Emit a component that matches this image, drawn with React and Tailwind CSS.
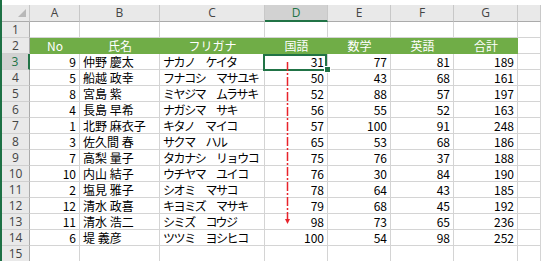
import React from "react";

const rows = [
  [9, "仲野 慶太", "ナカノ　ケイタ", 31, 77, 81, 189],
  [5, "船越 政幸", "フナコシ　マサユキ", 50, 43, 68, 161],
  [8, "宮島 紫", "ミヤジマ　ムラサキ", 52, 88, 57, 197],
  [4, "長島 早希", "ナガシマ　サキ", 56, 55, 52, 163],
  [1, "北野 麻衣子", "キタノ　マイコ", 57, 100, 91, 248],
  [3, "佐久間 春", "サクマ　ハル", 65, 53, 68, 186],
  [7, "高梨 量子", "タカナシ　リョウコ", 75, 76, 37, 188],
  [10, "内山 結子", "ウチヤマ　ユイコ", 76, 30, 84, 190],
  [2, "塩見 雅子", "シオミ　マサコ", 78, 64, 43, 185],
  [12, "清水 政喜", "キヨミズ　マサキ", 79, 68, 45, 192],
  [11, "清水 浩二", "シミズ　コウジ", 98, 73, 65, 236],
  [6, "堤 義彦", "ツツミ　ヨシヒコ", 100, 54, 98, 252],
];

const letters = ["A", "B", "C", "D", "E", "F", "G", ""];
const heads = ["No", "氏名", "フリガナ", "国語", "数学", "英語", "合計"];

const grid = "grid grid-cols-[28px_50px_80px_105px_63px_63px_63px_64px_1fr]";
const cell = "h-4 border-r border-b border-[#d4d4d4] px-[3px] leading-[15px] whitespace-nowrap overflow-hidden";
const rowHead = "h-4 border-r border-b border-r-[#ababab] border-b-[#d0d0d0] bg-[#e9e9e9] text-center text-[12px] leading-[15px] text-[#444] font-['Open_Sans',sans-serif]";

const App = () => (
  <div className="relative w-[541px] h-[261px] overflow-hidden bg-white border-l-2 border-[#1e7145] pt-[5px] font-['Noto_Sans_CJK_JP',sans-serif] text-[12px] text-black">
    {/* column letters */}
    <div className={`${grid} font-['Open_Sans',sans-serif] text-[12px] text-[#444]`}>
      <div className="relative h-[17px] bg-[#e9e9e9] border-r border-b border-r-[#c8c8c8] border-b-[#ababab]">
        <div className="absolute right-[3px] bottom-[4px] w-0 h-0 [border-bottom:8px_solid_#b8b8b8] [border-left:8px_solid_transparent]" />
      </div>
      {letters.map((l, i) =>
        l === "D" ? (
          <div key={i} className="h-[17px] bg-[#d2d2d2] border-r border-r-[#c8c8c8] border-b-2 border-b-[#217346] text-center leading-[16px] text-[#217346]">
            {l}
          </div>
        ) : (
          <div key={i} className="h-[17px] bg-[#e9e9e9] border-r border-b border-r-[#c8c8c8] border-b-[#ababab] text-center leading-[16px]">
            {l}
          </div>
        )
      )}
    </div>

    {/* row 1 */}
    <div className={grid}>
      <div className={rowHead}>1</div>
      {letters.map((_, i) => (
        <div key={i} className={cell} />
      ))}
    </div>

    {/* row 2 headings */}
    <div className={grid}>
      <div className={rowHead}>2</div>
      {heads.map((h, i) => (
        <div key={i} className="h-4 bg-[#70ad47] text-white text-center leading-[15px] border-b border-[#70ad47]">
          {h}
        </div>
      ))}
      <div className={cell} />
    </div>

    {rows.map((r, idx) => {
      const n = idx + 3;
      const sel = n === 3;
      return (
        <div key={n} className={grid}>
          {sel ? (
            <div className="h-4 border-r-2 border-b border-r-[#217346] border-b-[#d0d0d0] bg-[#d2d2d2] text-center text-[12px] leading-[15px] text-[#217346] font-['Open_Sans',sans-serif]">
              {n}
            </div>
          ) : (
            <div className={rowHead}>{n}</div>
          )}
          <div className={`${cell} text-right`}>{r[0]}</div>
          <div className={cell}>{r[1]}</div>
          <div className={`${cell} tracking-[-1.4px]`}>{r[2]}</div>
          <div className={`${cell} text-right`}>{r[3]}</div>
          <div className={`${cell} text-right`}>{r[4]}</div>
          <div className={`${cell} text-right`}>{r[5]}</div>
          <div className={`${cell} text-right`}>{r[6]}</div>
          <div className={cell} />
        </div>
      );
    })}

    {/* row 15 */}
    <div className={grid}>
      <div className={rowHead}>15</div>
      {letters.map((_, i) => (
        <div key={i} className={cell} />
      ))}
    </div>

    {/* selection on D3 */}
    <div className="absolute left-[261px] top-[54px] w-[64px] h-[17px] border-2 border-[#217346]" />
    <div className="absolute left-[322px] top-[66px] w-[7px] h-[7px] bg-[#217346] border border-white" />

    {/* red sort arrow */}
    <svg className="absolute left-[282px] top-[60px]" width="8" height="168" viewBox="0 0 8 168">
      <line x1="3.5" y1="2" x2="3.5" y2="160" stroke="#e8232b" strokeWidth="1.5" strokeDasharray="9 2 2 2" />
      <polygon points="1,159 6,159 3.5,164" fill="#e8232b" />
    </svg>
  </div>
);

export default App;
